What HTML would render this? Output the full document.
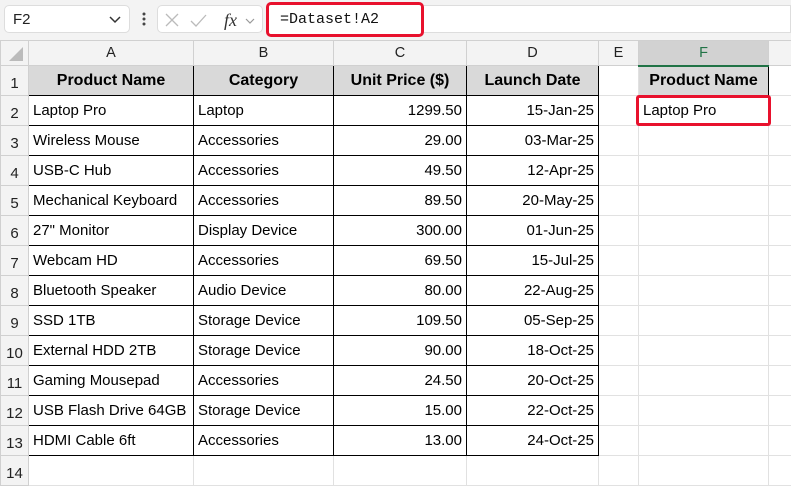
<!DOCTYPE html>
<html><head><meta charset="utf-8"><style>
*{box-sizing:border-box;margin:0;padding:0}
body{width:791px;height:486px;overflow:hidden;background:#fff;font-family:"Liberation Sans",sans-serif;position:relative}
.top{position:absolute;left:0;top:0;width:791px;height:42px;background:#f3f3f3}
.nb{position:absolute;left:4px;top:5px;width:126px;height:28px;background:#fff;border:1px solid #ddd;border-radius:5px;font-size:15px;padding:5px 0 0 8px;color:#222}
.fxb{position:absolute;left:157px;top:5px;width:106px;height:28px;background:#fff;border:1px solid #ddd;border-radius:5px}
.fb{position:absolute;left:266px;top:2px;width:158px;height:35px;background:#fff;border:3px solid #e8112d;border-radius:5px;font-family:"Liberation Mono",monospace;font-size:15px;padding:6px 0 0 11px;color:#111}
.fbr{position:absolute;left:424px;top:5px;width:367px;height:28px;background:#fff;border:1px solid #ddd;border-left:none}
table{position:absolute;left:0;top:40px;width:800px;border-collapse:collapse;table-layout:fixed;font-size:15px}
td{border:1px solid #e1e1e1;height:30px;padding:0 4px;white-space:nowrap;overflow:hidden;color:#000}
tr.h td{height:24px;background:#f3f3f3;text-align:center;color:#222;border-color:#d0d0d0;font-size:14.5px}
td.r{background:#f3f3f3;text-align:center;color:#222;border-color:#d0d0d0;padding:6px 0 0 0;font-size:15px}
td.b{border:1px solid #000}
td.hd{background:#d9d9d9;font-weight:bold;text-align:center;border:1px solid #000;font-size:16px}
td.n{text-align:right}
.red{position:absolute;left:636px;top:95px;width:135px;height:31px;border:3px solid #e8112d;border-radius:3px}
</style></head><body>
<div class="top"></div>
<div class="nb">F2<svg style="position:absolute;right:8px;top:10px" width="12" height="8"><path d="M1 1l5 5 5-5" fill="none" stroke="#333" stroke-width="1.5"/></svg></div>
<svg style="position:absolute;left:141px;top:12px" width="6" height="16"><circle cx="3" cy="2" r="1.5" fill="#444"/><circle cx="3" cy="7" r="1.5" fill="#444"/><circle cx="3" cy="12" r="1.5" fill="#444"/></svg>
<div class="fxb"><svg width="106" height="28"><path d="M8 8l12 12M20 8L8 20" stroke="#bbb" stroke-width="1.3"/><path d="M33 15l5 5 10-11" fill="none" stroke="#bbb" stroke-width="1.3"/><text x="66" y="20" font-family="Liberation Serif" font-style="italic" font-size="18" fill="#333">fx</text><path d="M88 13l4 4 4-4" fill="none" stroke="#999" stroke-width="1.2"/></svg></div>
<div class="fbr"></div>
<div class="fb">=Dataset!A2</div>
<table>
<colgroup><col style="width:28px"><col style="width:165px"><col style="width:140px"><col style="width:133px"><col style="width:132px"><col style="width:40px"><col style="width:130px"><col style="width:32px"></colgroup>
<tr class="h"><td style="background:#f3f3f3"><svg width="20" height="20" style="position:relative;top:2px"><path d="M18 4L18 18 4 18Z" fill="#bbb"/></svg></td><td>A</td><td>B</td><td>C</td><td>D</td><td>E</td><td style="background:#d2d2d2;border-bottom:2px solid #217346;color:#217346">F</td><td></td></tr>
<tr><td class="r">1</td><td class="hd">Product Name</td><td class="hd">Category</td><td class="hd">Unit Price ($)</td><td class="hd">Launch Date</td><td></td><td class="hd">Product Name</td><td></td></tr>
<tr><td class="r">2</td><td class="b">Laptop Pro</td><td class="b">Laptop</td><td class="b n">1299.50</td><td class="b n">15-Jan-25</td><td></td><td>Laptop Pro</td><td></td></tr>
<tr><td class="r">3</td><td class="b">Wireless Mouse</td><td class="b">Accessories</td><td class="b n">29.00</td><td class="b n">03-Mar-25</td><td></td><td></td><td></td></tr>
<tr><td class="r">4</td><td class="b">USB-C Hub</td><td class="b">Accessories</td><td class="b n">49.50</td><td class="b n">12-Apr-25</td><td></td><td></td><td></td></tr>
<tr><td class="r">5</td><td class="b">Mechanical Keyboard</td><td class="b">Accessories</td><td class="b n">89.50</td><td class="b n">20-May-25</td><td></td><td></td><td></td></tr>
<tr><td class="r">6</td><td class="b">27" Monitor</td><td class="b">Display Device</td><td class="b n">300.00</td><td class="b n">01-Jun-25</td><td></td><td></td><td></td></tr>
<tr><td class="r">7</td><td class="b">Webcam HD</td><td class="b">Accessories</td><td class="b n">69.50</td><td class="b n">15-Jul-25</td><td></td><td></td><td></td></tr>
<tr><td class="r">8</td><td class="b">Bluetooth Speaker</td><td class="b">Audio Device</td><td class="b n">80.00</td><td class="b n">22-Aug-25</td><td></td><td></td><td></td></tr>
<tr><td class="r">9</td><td class="b">SSD 1TB</td><td class="b">Storage Device</td><td class="b n">109.50</td><td class="b n">05-Sep-25</td><td></td><td></td><td></td></tr>
<tr><td class="r">10</td><td class="b">External HDD 2TB</td><td class="b">Storage Device</td><td class="b n">90.00</td><td class="b n">18-Oct-25</td><td></td><td></td><td></td></tr>
<tr><td class="r">11</td><td class="b">Gaming Mousepad</td><td class="b">Accessories</td><td class="b n">24.50</td><td class="b n">20-Oct-25</td><td></td><td></td><td></td></tr>
<tr><td class="r">12</td><td class="b">USB Flash Drive 64GB</td><td class="b">Storage Device</td><td class="b n">15.00</td><td class="b n">22-Oct-25</td><td></td><td></td><td></td></tr>
<tr><td class="r">13</td><td class="b">HDMI Cable 6ft</td><td class="b">Accessories</td><td class="b n">13.00</td><td class="b n">24-Oct-25</td><td></td><td></td><td></td></tr>
<tr><td class="r">14</td><td></td><td></td><td></td><td></td><td></td><td></td><td></td></tr>
</table>
<div class="red"></div>
</body></html>
